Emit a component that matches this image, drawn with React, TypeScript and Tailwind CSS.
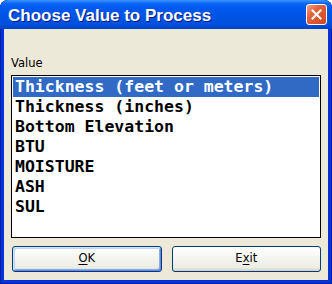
const items = [
  "Thickness (feet or meters)",
  "Thickness (inches)",
  "Bottom Elevation",
  "BTU",
  "MOISTURE",
  "ASH",
  "SUL",
];

/* XP-style close button */
function CloseButton() {
  return (
    <div className="w-[21px] h-[21px] rounded-[3px] border border-white bg-[linear-gradient(135deg,#F4A28A_0%,#E2643E_35%,#D1471F_100%)] flex items-center justify-center">
      <svg width="11" height="11" viewBox="0 0 11 11">
        <path d="M1.5 1.5 L9.5 9.5 M9.5 1.5 L1.5 9.5" stroke="#fff" strokeWidth="2" strokeLinecap="square" />
      </svg>
    </div>
  );
}

function XpButton({ children, isDefault }: { children: React.ReactNode; isDefault?: boolean }) {
  return (
    <button
      className={`h-[26px] rounded-[3px] border border-[#003C74] bg-[linear-gradient(180deg,#FFFFFF_0%,#F6F6F2_40%,#EDEDE6_85%,#D6D0C5_100%)] text-[11.5px] text-black font-['DejaVu_Sans',sans-serif] ${
        isDefault
          ? "shadow-[inset_1px_1px_0_#CEE7FF,inset_-1px_-1px_0_#6982EE,inset_2px_2px_0_#BCD4F6,inset_-2px_-2px_0_#89ADE4]"
          : ""
      }`}
    >
      {children}
    </button>
  );
}

export default function App() {
  const selected = 0;

  return (
    <div className="w-[332px] h-[284px] rounded-t-[8px] bg-[#0831D9] flex flex-col overflow-hidden shadow-[inset_1px_0_0_#001EA0,inset_-1px_0_0_#001EA0,inset_0_-1px_0_#001EA0]">
      {/* Title bar */}
      <div className="h-[29px] shrink-0 flex items-center justify-between pl-[8px] pr-[5px] rounded-t-[8px] bg-[linear-gradient(180deg,#3D95FF_0%,#0A66F5_12%,#0058EE_30%,#0054E3_60%,#0050DC_85%,#0042C6_100%)]">
        <span className="pt-[2px] text-white font-bold text-[17px] leading-none font-['Liberation_Sans',Arial,sans-serif] [text-shadow:1px_1px_0_#0A1883]">
          Choose Value to Process
        </span>
        <CloseButton />
      </div>

      {/* Client area */}
      <div className="flex-1 mx-[4px] mb-[4px] bg-[#ECE9D8] flex flex-col pt-[27px] pb-[8px]">
        <div className="pl-[7px] h-[14px] leading-[14px] text-[11.5px] text-black font-['DejaVu_Sans',sans-serif]">
          Value
        </div>

        <div className="mt-[5px] mx-[7px] h-[163px] border border-black bg-white p-[1px]">
          {items.map((item, idx) => (
            <div
              key={idx}
              className={`h-[20px] leading-[20px] pl-[2px] whitespace-pre text-[16.5px] font-bold font-['DejaVu_Sans_Mono',monospace] ${
                idx === selected ? "bg-[#316AC5] text-white" : "text-black"
              }`}
            >
              {item}
            </div>
          ))}
        </div>

        <div className="mt-[8px] pl-[8px] pr-[7px] grid grid-cols-2 gap-[10px]">
          <XpButton isDefault>
            <span className="underline underline-offset-2">O</span>K
          </XpButton>
          <XpButton>
            E<span className="underline underline-offset-2">x</span>it
          </XpButton>
        </div>
      </div>
    </div>
  );
}
